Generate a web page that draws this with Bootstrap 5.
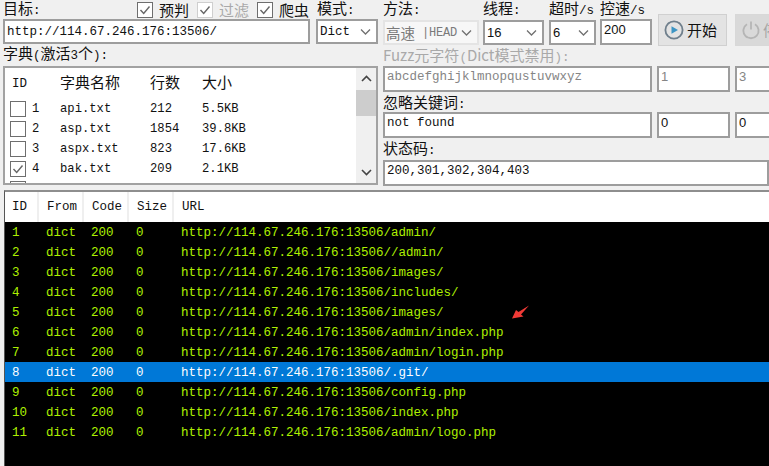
<!DOCTYPE html>
<html lang="zh">
<head>
<meta charset="utf-8">
<title>Scanner</title>
<link href="https://cdn.jsdelivr.net/npm/bootstrap@5.3.0/dist/css/bootstrap.min.css" rel="stylesheet">
<style>
html,body{height:466px;overflow:hidden;}
body{background:#f0f0f0;color:#111;font-family:"Noto Sans CJK SC","Liberation Sans",sans-serif;font-size:15px;line-height:19px;}
.app-shell{width:769px;height:466px;position:relative;overflow:hidden;}
.top-pane{height:190px;padding-left:3px;gap:5px;}
.left-pane{width:375px;flex:none;}
.right-pane{width:386px;flex:none;}
.lbl{white-space:nowrap;}
.hw{font-family:"Liberation Mono",monospace;font-size:12.5px;}
.row-1{height:19px;}
.form-control.win,.form-select.win{border:2px solid #9d9d9d;border-radius:0;background-color:#fff;height:25px;min-height:0;padding:0 2px;font-family:"Liberation Mono",monospace;font-size:12.5px;line-height:18px;color:#111;box-shadow:none;flex:none;}
.form-select.win{padding-right:14px;background-position:right 5px center;background-size:11px 9px;background-image:url("data:image/svg+xml,%3Csvg xmlns='http://www.w3.org/2000/svg' viewBox='0 0 11 9'%3E%3Cpath d='M1 2.5l4.5 4.5L10 2.5' fill='none' stroke='%23707070' stroke-width='1.3'/%3E%3C/svg%3E");}
.form-control.win.sans-val,.form-select.win.sans-val{font-family:"Liberation Sans",sans-serif;font-size:13px;}
.form-select.win.off{border-color:#e4e4e4;color:#7a7a7a;background-color:#f7f7f7;display:flex;align-items:center;white-space:nowrap;padding-left:1px;font-family:"Noto Sans CJK SC",sans-serif;font-size:14.5px;}
.form-select.win.off .hw{font-size:12px;letter-spacing:-.2px;}
.form-control.win.dim{color:#858585;}
.form-control.win.tall{height:26px;padding-bottom:5px;}
.check-item{display:flex;align-items:center;gap:6px;height:19px;white-space:nowrap;margin:0;}
.check-item.off{color:#a9a9a9;}
.form-check-input.box{width:16px;height:16px;margin:0;border:1.5px solid #6e6e6e;border-radius:0;background-color:#fff;flex:none;box-shadow:none;opacity:1;}
.form-check-input.box:checked{background-color:#fff;border-color:#6e6e6e;background-size:14px 14px;background-image:url("data:image/svg+xml,%3Csvg xmlns='http://www.w3.org/2000/svg' viewBox='0 0 14 14'%3E%3Cpath d='M2.5 7l3.2 3.5L11.5 3.5' fill='none' stroke='%23666' stroke-width='1.4'/%3E%3C/svg%3E");}
.check-item.off .form-check-input.box{border-color:#cfcfcf;}
.list-frame{width:375px;height:119px;margin-top:2px;border:2px solid #a2a2a2;background:#fff;overflow:hidden;}
.list-body{flex:1;overflow:hidden;}
.dict-head{height:31px;line-height:27px;font-size:15px;}
.dict-head .hw{font-size:12.5px;line-height:32px;}
.dict-line{height:20px;align-items:center;font-family:"Liberation Mono",monospace;font-size:12.2px;}
.dc-a{width:55px;padding-left:7px;flex:none;}
.dc-b{width:90px;flex:none;}
.dc-c{width:52px;flex:none;}
.dict-line .dc-a{display:flex;align-items:center;gap:6px;padding-left:5px;}
.scroll-track{width:20px;flex:none;background:#f0f0f0;}
.scroll-arrow{height:22px;display:flex;align-items:center;justify-content:center;}
.scroll-thumb{height:26px;background:#cdcdcd;margin-bottom:45px;}
.btn.go{width:69px;height:32px;border:1px solid #d0d0d0;border-radius:0;background:#e3e3e3;color:#111;padding:0 0 0 5px;font-size:15px;display:flex;align-items:center;gap:3px;margin-left:2px;flex:none;}
.btn.stop{width:60px;height:32px;border:1px solid #d8d8d8;border-radius:0;background:#d9d9d9;color:#a5a5a5;padding:0 0 0 5px;font-size:15px;display:flex;align-items:center;gap:2px;opacity:1;flex:none;margin-left:4px;}
.ctrl-row{margin-top:-5px;height:32px;align-items:flex-start;gap:4px;}
.ctrl-row .drop{margin-top:6px;}
.faded{color:#a9a9a9;}
.sub-lbl{height:20px;line-height:20px;}
.sub-lbl.up{line-height:17px;}
.status-lbl{height:22px;line-height:20px;}
.field-row{display:flex;}
.form-control.win.wide-f{width:269px;margin-right:5px;}
.form-control.win.mid-f{width:73px;margin-right:5px;}
.form-control.win.end-f{width:36px;}
.result-pane{margin-left:4px;border-top:2px solid #8e8e8e;border-left:1px solid #555;height:276px;background:#000;}
.table.scan{margin:0;table-layout:fixed;font-family:"Liberation Mono",monospace;font-size:12.5px;--bs-table-bg:transparent;border-color:transparent;}
.table.scan th{background:#fff;color:#111;height:30px;padding:0 0 0 8px;font-weight:400;border:0;border-right:2px solid #efefef;vertical-align:middle;}
.table.scan th:last-child{border-right:0;}
.table.scan td{height:20px;padding:2px 0 0 8px;border:0;line-height:18px;background:#000;color:#aef000;white-space:nowrap;}
.table.scan th:first-child,.table.scan td:first-child{padding-left:7px;}
.table.scan tr.picked td{background:#0078d7;color:#fff;}
.red-arrow{position:absolute;left:512px;top:305px;}
</style>
</head>
<body>
<div class="app-shell">
  <div class="top-pane d-flex">
    <div class="left-pane">
      <div class="row-1 d-flex align-items-center">
        <span class="lbl" style="width:134px">目标<span class="hw">:</span></span>
        <label class="check-item me-2"><input class="form-check-input box" type="checkbox" checked>预判</label>
        <label class="check-item off me-2"><input class="form-check-input box" type="checkbox" checked disabled>过滤</label>
        <label class="check-item me-2"><input class="form-check-input box" type="checkbox" checked>爬虫</label>
        <span class="lbl">模式<span class="hw">:</span></span>
      </div>
      <div class="d-flex justify-content-between">
        <input class="form-control win" style="width:307px" value="http://114.67.246.176:13506/">
        <select class="form-select win" style="width:62px"><option>Dict</option></select>
      </div>
      <div class="lbl sub-lbl up">字典<span class="hw">(</span>激活<span class="hw">3</span>个<span class="hw">):</span></div>
      <div class="list-frame d-flex">
        <div class="list-body">
          <div class="dict-head d-flex"><div class="dc-a hw">ID</div><div class="dc-b">字典名称</div><div class="dc-c">行数</div><div>大小</div></div>
          <div class="dict-line d-flex"><div class="dc-a"><input class="form-check-input box" type="checkbox">1</div><div class="dc-b">api.txt</div><div class="dc-c">212</div><div>5.5KB</div></div>
          <div class="dict-line d-flex"><div class="dc-a"><input class="form-check-input box" type="checkbox">2</div><div class="dc-b">asp.txt</div><div class="dc-c">1854</div><div>39.8KB</div></div>
          <div class="dict-line d-flex"><div class="dc-a"><input class="form-check-input box" type="checkbox">3</div><div class="dc-b">aspx.txt</div><div class="dc-c">823</div><div>17.6KB</div></div>
          <div class="dict-line d-flex"><div class="dc-a"><input class="form-check-input box" type="checkbox" checked>4</div><div class="dc-b">bak.txt</div><div class="dc-c">209</div><div>2.1KB</div></div>
          <div class="dict-line d-flex"><div class="dc-a"><input class="form-check-input box" type="checkbox"></div><div class="dc-b">di</div></div>
        </div>
        <div class="scroll-track">
          <div class="scroll-arrow"><svg width="11" height="8" viewBox="0 0 11 8"><path d="M1 6l4.5-4.5L10 6" fill="none" stroke="#444" stroke-width="1.6"/></svg></div>
          <div class="scroll-thumb"></div>
          <div class="scroll-arrow"><svg width="11" height="8" viewBox="0 0 11 8"><path d="M1 2l4.5 4.5L10 2" fill="none" stroke="#444" stroke-width="1.6"/></svg></div>
        </div>
      </div>
    </div>
    <div class="right-pane">
      <div class="row-1 d-flex align-items-center">
        <span class="lbl" style="width:100px">方法<span class="hw">:</span></span>
        <span class="lbl" style="width:66px">线程<span class="hw">:</span></span>
        <span class="lbl" style="width:51px">超时<span class="hw">/s</span></span>
        <span class="lbl">控速<span class="hw">/s</span></span>
      </div>
      <div class="ctrl-row d-flex">
        <div class="form-select win off drop" style="width:96px">高速<span class="hw">&nbsp;|HEAD</span></div>
        <select class="form-select win sans-val drop" style="width:61px;margin-right:1px"><option>16</option></select>
        <select class="form-select win sans-val drop" style="width:47px"><option>6</option></select>
        <input class="form-control win sans-val tall" style="width:52px;margin-top:5px" value="200">
        <button class="btn go" type="button"><svg width="20" height="20" viewBox="0 0 20 20"><circle cx="10" cy="10" r="8.6" fill="none" stroke="#6f7f8c" stroke-width="1.8"/><path d="M7.5 6.2L14 10l-6.5 3.8z" fill="#3d95c4"/></svg>开始</button>
        <button class="btn stop" type="button" disabled><svg width="20" height="20" viewBox="0 0 20 20"><path d="M6 4.2a7.6 7.6 0 1 0 8 0M10 1.5v8" fill="none" stroke="#b5b5b5" stroke-width="1.8"/></svg>停止</button>
      </div>
      <div class="lbl faded sub-lbl up">Fuzz元字符<span class="hw">(</span>Dict模式禁用<span class="hw">):</span></div>
      <div class="field-row">
        <input class="form-control win dim tall wide-f" value="abcdefghijklmnopqustuvwxyz">
        <input class="form-control win dim tall sans-val mid-f" value="1">
        <input class="form-control win dim tall sans-val end-f" value="3">
      </div>
      <div class="lbl sub-lbl">忽略关键词<span class="hw">:</span></div>
      <div class="field-row">
        <input class="form-control win tall wide-f" value="not found">
        <input class="form-control win tall sans-val mid-f" value="0">
        <input class="form-control win tall sans-val end-f" value="0">
      </div>
      <div class="lbl status-lbl">状态码<span class="hw">:</span></div>
      <input class="form-control win tall" style="width:386px" value="200,301,302,304,403">
    </div>
  </div>
  <div class="result-pane">
    <table class="table scan">
      <colgroup><col style="width:33px"><col style="width:45px"><col style="width:45px"><col style="width:45px"><col></colgroup>
      <thead><tr><th>ID</th><th>From</th><th>Code</th><th>Size</th><th>URL</th></tr></thead>
      <tbody>
        <tr><td>1</td><td>dict</td><td>200</td><td>0</td><td>http://114.67.246.176:13506/admin/</td></tr>
        <tr><td>2</td><td>dict</td><td>200</td><td>0</td><td>http://114.67.246.176:13506//admin/</td></tr>
        <tr><td>3</td><td>dict</td><td>200</td><td>0</td><td>http://114.67.246.176:13506/images/</td></tr>
        <tr><td>4</td><td>dict</td><td>200</td><td>0</td><td>http://114.67.246.176:13506/includes/</td></tr>
        <tr><td>5</td><td>dict</td><td>200</td><td>0</td><td>http://114.67.246.176:13506/images/</td></tr>
        <tr><td>6</td><td>dict</td><td>200</td><td>0</td><td>http://114.67.246.176:13506/admin/index.php</td></tr>
        <tr><td>7</td><td>dict</td><td>200</td><td>0</td><td>http://114.67.246.176:13506/admin/login.php</td></tr>
        <tr class="picked"><td>8</td><td>dict</td><td>200</td><td>0</td><td>http://114.67.246.176:13506/.git/</td></tr>
        <tr><td>9</td><td>dict</td><td>200</td><td>0</td><td>http://114.67.246.176:13506/config.php</td></tr>
        <tr><td>10</td><td>dict</td><td>200</td><td>0</td><td>http://114.67.246.176:13506/index.php</td></tr>
        <tr><td>11</td><td>dict</td><td>200</td><td>0</td><td>http://114.67.246.176:13506/admin/logo.php</td></tr>
      </tbody>
    </table>
  </div>
  <svg class="red-arrow" width="18" height="14" viewBox="0 0 18 14"><path d="M0 13.5L4 5 6.5 7 17 .5 9 9.5 11.5 11.5z" fill="#f03a36"/></svg>
</div>
<script src="https://cdn.jsdelivr.net/npm/bootstrap@5.3.0/dist/js/bootstrap.bundle.min.js"></script>
</body>
</html>
